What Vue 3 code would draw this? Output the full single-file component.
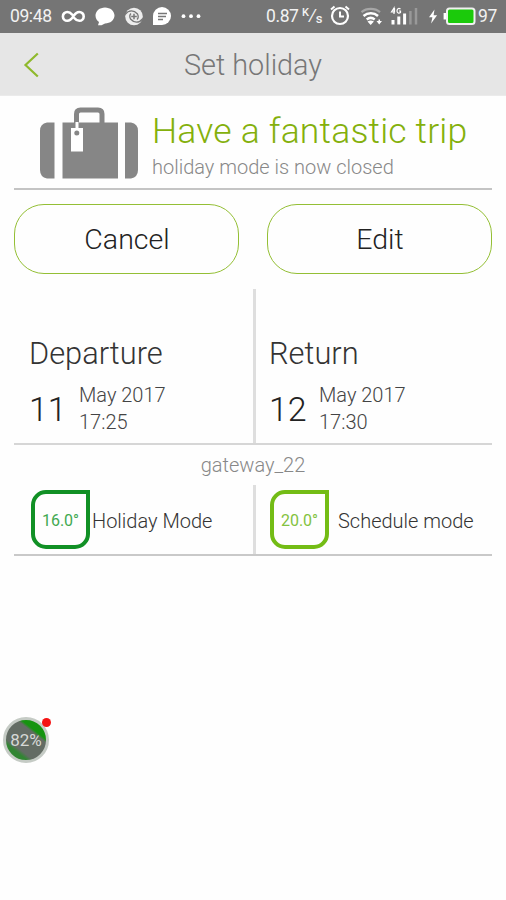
<script setup>
const trips = [
  { title: 'Departure', day: '11', month: 'May 2017', time: '17:25' },
  { title: 'Return', day: '12', month: 'May 2017', time: '17:30' },
]
const modes = [
  { temp: '16.0°', label: 'Holiday Mode', kind: 'holiday' },
  { temp: '20.0°', label: 'Schedule mode', kind: 'schedule' },
]
</script>

<template>
  <div class="screen">
    <div class="status">
      <span class="clock">09:48</span>
      <svg class="left-icons" width="144" height="33" viewBox="58 0 144 33" fill="none">
        <path d="M72 14.500C70.700 12.800 69.200 12 67.300 12a4.400 4.400 0 0 0 0 8.800c2.500 0 4.200-1.500 6-4.400s3.500-4.400 6-4.400a4.400 4.400 0 0 1 0 8.800c-2 0-3.500-.8-4.800-2.500" stroke="#fff" stroke-width="2.600" stroke-linecap="round" />
        <path d="M105 7.500c5.300 0 9.500 3.600 9.500 8s-4.200 8-9.500 8l-3.500 1.700-3.500.1 1-3.400a8 8 0 0 1-3.500-6.400c0-4.400 4.200-8 9.500-8z" fill="#fff" />
        <circle cx="134" cy="16.500" r="8.800" fill="#ededed" />
        <path d="M125 14.500c4-5 9-4.500 12.500-.5c1 2 1 4-.5 5.500M143 18.500c-4 5-9 4.500-12.500.5c-1-2-1-4 .5-5.500" stroke="#777" stroke-width="1.300" />
        <path d="M134 13.700v5.600M131.200 16.500h5.600" stroke="#777" stroke-width="1.500" />
        <path d="M153 25V16a9 9 0 1 1 9 9z" fill="#fff" />
        <path d="M158 13.500h9M158 16.500h8M158 19.500h5" stroke="#777" stroke-width="1.400" />
        <g fill="#fff"><circle cx="183.500" cy="16.200" r="1.900" /><circle cx="191" cy="16.200" r="1.900" /><circle cx="198.500" cy="16.200" r="1.900" /></g>
      </svg>
      <span class="speed">0.87</span>
      <span class="unit"><sup>K</sup><i>/</i><sub>s</sub></span>
      <svg class="right-icons" width="148" height="33" viewBox="329 0 148 33" fill="none">
        <circle cx="340" cy="16" r="8" stroke="#fff" stroke-width="2.200" />
        <path d="M340 11.500v5h4M331 9.500l3.500-3M349 9.500l-3.500-3" stroke="#fff" stroke-width="2" />
        <path d="M361.500 12.200c5-4.300 13.500-4.300 18.500 0" stroke="#a6a6a6" stroke-width="2.200" />
        <path d="M363.500 16c4.300-3.700 10.500-3.700 14.500 0M366.700 19.500c2.500-2 5.500-2 8 0" stroke="#fff" stroke-width="2.500" />
        <path d="m367.500 21.500 3.200 3.500 3.200-3.500c-2-1.500-4.400-1.500-6.400 0zM376.500 21h2v-1.500h1.500V21h2l-2.800 3.500z" fill="#fff" />
        <path d="M394.500 8v4h-3l2.500-4v6M400.500 9c-2-1.500-3.500 0-3.500 2s2 2.700 3.500 1.500V11h-1.500" stroke="#fff" stroke-width="1.200" />
        <path d="M393 20v4.500M398.800 16.500v8M404.600 13.500v11" stroke="#fff" stroke-width="3" />
        <path d="M410.400 11v13.500M416 8v16.500" stroke="#999" stroke-width="2.500" />
        <path d="m434.500 9.500-5.500 7.700h3.400l-1.300 6.300 6-8.200h-3.500z" fill="#fff" />
        <rect x="447" y="8.500" width="27.500" height="15.500" rx="2.500" fill="#1bca0b" stroke="#f1f1f1" stroke-width="2" />
        <path d="M444.800 13v6.500" stroke="#fff" stroke-width="2.400" />
      </svg>
      <span class="battery">97</span>
    </div>

    <header class="bar">
      <svg class="back" width="18" height="28" viewBox="0 0 18 28" fill="none">
        <path d="M15.800 2.500 3.500 14l12.300 11.500" stroke="#8fb92c" stroke-width="2.200" />
      </svg>
      <h1>Set holiday</h1>
    </header>

    <main>
      <section class="hero">
        <svg width="100" height="74" viewBox="0 0 100 74" fill="#868686">
          <path d="M15.500 15.500H8Q1 16.500 1 24v39q0 7 7 8.500h7.500zM86 15.500h6q7 1 7 8.500v39q0 7-7 8.500h-6z" />
          <path d="M23.500 15.500H79v56H23.500z" />
          <path d="M37.500 18V7q0-4 4-4H59q4 0 4 4v11" fill="none" stroke="#868686" stroke-width="5" />
          <path d="M36.500 15h3v6h4.500v23.500H32V21h4.500z" fill="#fff" />
          <circle cx="37.800" cy="26" r="2.500" />
        </svg>
        <div class="message">
          <h2>Have a fantastic trip</h2>
          <p>holiday mode is now closed</p>
        </div>
      </section>

      <div class="actions">
        <button><span>Cancel</span></button>
        <button><span>Edit</span></button>
      </div>

      <section class="dates">
        <div v-for="t in trips" :key="t.title" class="trip">
          <h3>{{ t.title }}</h3>
          <div class="when">
            <span class="day">{{ t.day }}</span>
            <div class="detail"><span>{{ t.month }}</span><span>{{ t.time }}</span></div>
          </div>
        </div>
      </section>

      <div class="gateway">gateway_22</div>

      <section class="modes">
        <div v-for="m in modes" :key="m.kind" class="mode" :class="m.kind">
          <span class="temp">{{ m.temp }}</span>
          <span class="label">{{ m.label }}</span>
        </div>
      </section>
    </main>

    <div class="monitor">82%<span class="dot"></span></div>
  </div>
</template>

<style>
body { background: #fefefe; }
</style>

<style scoped>
.screen { position: relative; width: 506px; height: 900px; overflow: hidden; background: #fefefe; font-family: Roboto, "Liberation Sans", sans-serif; color: #333; box-sizing: border-box; }
.screen * { box-sizing: border-box; }
h1, h2, h3, p { margin: 0; font-weight: 300; white-space: nowrap; }
.status { height: 33px; background: #757575; color: #f2f2f2; display: flex; align-items: center; font-size: 17.500px; line-height: 33px; }
.clock { width: 48px; margin-left: 10px; letter-spacing: -0.4px; }
.speed { width: 35px; margin-left: 64px; letter-spacing: -0.4px; }
.unit { display: flex; width: 22px; margin-left: 1px; margin-right: 5px; height: 33px; }
.unit sup { line-height: 25px; font-weight: 500; font-size: 11px; vertical-align: baseline; }
.unit i { line-height: 31px; font-size: 17px; }
.unit sub { line-height: 38px; font-weight: 500; font-size: 13px; vertical-align: baseline; }
.battery { margin-left: 1px; letter-spacing: -0.4px; }
.bar { height: 63px; background: #e6e6e6; display: grid; grid-template-columns: 48px 1fr 48px; align-items: center; border-bottom: 1px solid #ebebeb; }
.back { margin-left: 22px; margin-top: 1px; }
.bar h1 { text-align: center; font-size: 28.800px; line-height: 60px; padding-top: 2px; color: #777; }
main { padding: 0 14px; }
.hero { height: 94px; display: flex; padding: 11px 0 0 25px; border-bottom: 2px solid #c4c4c4; }
.hero svg { flex: none; }
.message { margin-left: 13px; }
.message h2 { color: #84b00c; font-size: 35.500px; line-height: 48px; letter-spacing: 0.180px; }
.message p { color: #888; font-size: 20px; line-height: 24px; }
.actions { display: grid; grid-template-columns: 225px 225px; gap: 28px; padding-top: 14px; }
button { height: 70px; border: 1.500px solid #94bf35; border-radius: 30px; background: #fefefe; color: #222; font: 300 28.500px/67px Roboto, sans-serif; padding: 1px 0 0 1px; }
.dates { display: grid; grid-template-columns: 241.500px 1fr; height: 156px; margin-top: 15px; border-bottom: 2px solid #d6d6d6; }
.trip { padding: 45px 0 0 15px; }
.trip:first-child, .mode:first-child { border-right: 3px solid #dedede; }
.trip + .trip { padding-left: 13.500px; }
h3 { font-size: 30.800px; line-height: 40px; color: #333; }
.when { display: flex; padding-top: 8px; }
.day { width: 50px; font-size: 34px; line-height: 54px; font-weight: 300; color: #222; }
.detail { display: flex; flex-direction: column; font-size: 20px; line-height: 27px; color: #444; font-weight: 300; }
.gateway { height: 40px; line-height: 40px; text-align: center; font-size: 20px; color: #888; font-weight: 300; }
.modes { display: grid; grid-template-columns: 241.500px 1fr; height: 71px; border-bottom: 2px solid #c9c9c9; }
.mode { display: flex; align-items: center; padding-left: 17px; }
.mode.schedule { padding-left: 14.500px; }
.temp { width: 59px; height: 59px; border: 4px solid #119025; border-radius: 15px 0 15px 15px; color: #41a951; text-align: center; line-height: 53px; font-size: 16px; flex: none; }
.schedule .temp { border-color: #73bc15; color: #83c240; }
.label { margin-left: 2px; font-size: 20px; font-weight: 300; color: #333; white-space: nowrap; padding-top: 2px; }
.schedule .label { margin-left: 9px; }
.monitor { position: absolute; left: 3px; top: 717px; width: 46px; height: 46px; border-radius: 50%; border: 3px solid #c5cbc5; background: linear-gradient(38deg, #318532 0 23%, #636c64 30% 68%, #159410 73%); color: #d6d9d6; text-align: center; font-size: 17px; line-height: 40px; }
.dot { position: absolute; width: 9px; height: 9px; border-radius: 50%; background: #f51313; right: -5px; top: -2px; }
</style>
